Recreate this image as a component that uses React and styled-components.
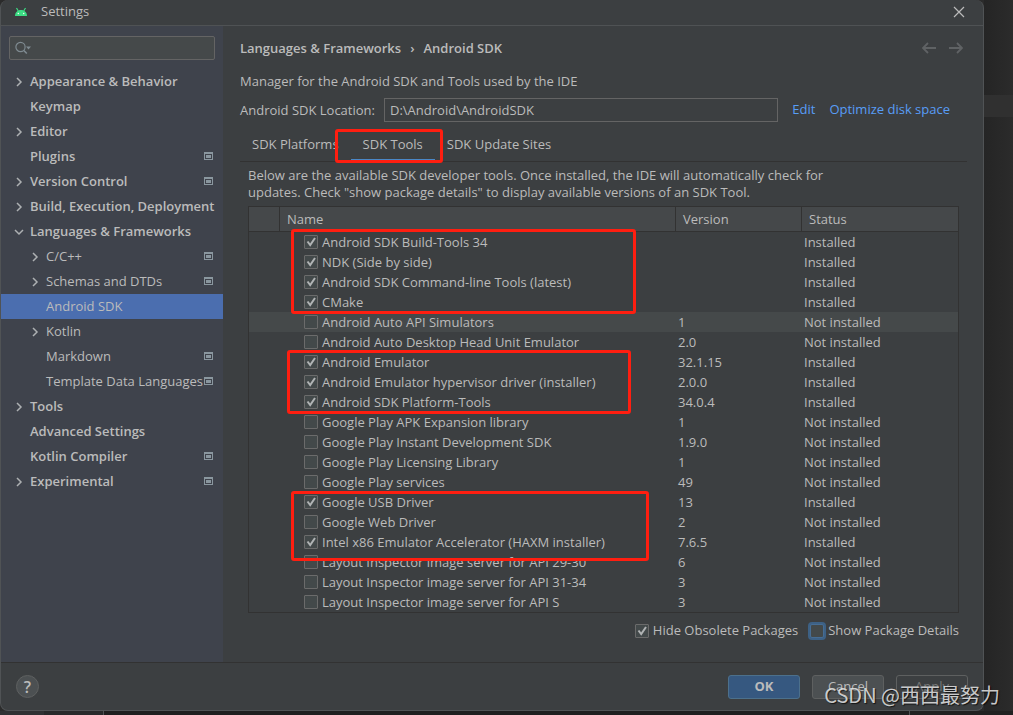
import React, { useState } from 'react';
import styled, { createGlobalStyle, css } from 'styled-components';

const GlobalStyle = createGlobalStyle`
  * {
    box-sizing: border-box;
  }
  body {
    margin: 0;
    background: #2b2b2b;
    color: #bbbbbb;
    font-family: 'Open Sans', 'Noto Sans', 'Noto Sans CJK SC', sans-serif;
    font-size: 13px;
    line-height: 17px;
  }
  button, input {
    font: inherit;
    color: inherit;
  }
`;

const Page = styled.div`
  position: relative;
  display: grid;
  grid-template-columns: minmax(0, 1fr) 29px;
  min-height: 100vh;
  grid-template-rows: auto 1fr;
  overflow: hidden;
`;

const EditorEdge = styled.div`
  background: linear-gradient(to right, #252525, #2b2b2b);
  padding-top: 95px;
`;

const CurrentLine = styled.div`
  height: 22px;
  background: #303030;
`;

const StatusStrip = styled.div`
  grid-column: 1 / -1;
  display: flex;
  min-height: 5px;
  background: #212121;
`;

const StripPart = styled.div`
  flex: none;
  width: ${(props) => props.$width}px;
  background: ${(props) => props.$color};
  border-right: 1px solid ${(props) => props.$line || props.$color};
`;

const Dialog = styled.div`
  display: flex;
  flex-direction: column;
  background: #3c3f41;
  border: 1px solid #505355;
  border-top: none;
  border-radius: 8px;
  overflow: hidden;
`;

const TitleBar = styled.header`
  display: flex;
  align-items: center;
  height: 26px;
  padding: 0 18px 2px 13px;
  border-bottom: 1px solid #4f5254;
`;

const Title = styled.span`
  flex: 1;
  padding-left: 13px;
`;

const IconButton = styled.button`
  display: flex;
  padding: 0;
  border: none;
  background: none;
  color: ${(props) => props.$color || '#bbbbbb'};
`;

const Body = styled.div`
  display: flex;
`;

const Sidebar = styled.nav`
  flex: none;
  width: 222px;
  background: #3f434c;
`;

const SearchBox = styled.label`
  display: flex;
  align-items: center;
  height: 24px;
  margin: 10px 8px 9px;
  padding: 0 5px;
  background: #45494a;
  border: 1px solid #646464;
  border-radius: 2px;
`;

const SearchInput = styled.input`
  flex: 1;
  min-width: 0;
  border: none;
  outline: none;
  background: none;
`;

const Tree = styled.ul`
  margin: 0;
  padding: 0;
  list-style: none;
`;

const TreeItem = styled.li`
  display: flex;
  align-items: center;
  height: 25px;
  padding: 0 10px 0 ${(props) => (props.$nested ? 29 : 13)}px;
  white-space: nowrap;
  font-weight: ${(props) => (props.$nested ? 400 : 600)};
  background: ${(props) => (props.$selected ? '#4b6eaf' : 'transparent')};
`;

const TreeArrow = styled.span`
  display: flex;
  flex: none;
  width: 16px;
`;

const TreeLabel = styled.span`
  flex: 1;
  min-width: 0;
`;

const Main = styled.main`
  flex: 1;
  min-width: 0;
  padding: 0 16px 14px 17px;
`;

const MainHeader = styled.div`
  display: flex;
  align-items: center;
  height: 44px;
`;

const Breadcrumbs = styled.h1`
  display: flex;
  flex: 1;
  gap: 9px;
  margin: 0;
  font-size: 13px;
  font-weight: 600;
`;

const History = styled.div`
  display: flex;
  gap: 13px;
  padding-right: 4px;
`;

const Description = styled.p`
  margin: 0;
  line-height: 22px;
`;

const LocationRow = styled.div`
  display: flex;
  align-items: center;
  margin: 6px 17px 7px 0;
`;

const LocationLabel = styled.label`
  flex: none;
  width: 144px;
`;

const LocationInput = styled.input`
  flex: 1;
  min-width: 0;
  height: 24px;
  padding: 0 5px 1px;
  border: 1px solid #646464;
  background: #3c3f41;
`;

const Link = styled.a`
  margin-left: 14px;
  padding-bottom: 1px;
  color: #589df6;
  text-decoration: none;
`;

const Tabs = styled.div`
  position: relative;
  display: flex;
  height: 33px;
  border-bottom: 1px solid #323232;
`;

const Tab = styled.button`
  padding: 1px 12px 0;
  border: none;
  border-bottom: 2px solid transparent;
  background: none;
  ${(props) => props.$active && css`
    border-bottom-color: #4a88c7;
  `}
`;

const Panel = styled.div`
  padding: 5px 8px 0;
`;

const Hint = styled.p`
  max-width: 600px;
  margin: 0 0 5px;
`;

const TableBox = styled.div`
  position: relative;
  border: 1px solid #323232;
`;

const Table = styled.table`
  width: 100%;
  table-layout: fixed;
  border-spacing: 0;
`;

const HeadCell = styled.th`
  width: ${(props) => (props.$width ? `${props.$width}px` : 'auto')};
  height: 25px;
  padding: 0 7px;
  text-align: left;
  font-weight: 400;
  background: #45484a;
  border-bottom: 1px solid #323232;
  border-right: 1px solid #323232;

  &:last-child {
    border-right: none;
  }
`;

const Row = styled.tr`
  background: ${(props) => (props.$hovered ? '#45494a' : 'transparent')};
`;

const Cell = styled.td`
  height: 20px;
  padding: 0 0 0 ${(props) => (props.$name ? 24 : 2)}px;
  line-height: 20px;
  white-space: nowrap;
`;

const CheckLabel = styled.label`
  display: flex;
  align-items: center;
  gap: 4px;
`;

const CheckWrap = styled.span`
  display: grid;
  flex: none;

  > * {
    grid-area: 1 / 1;
  }
`;

const CheckInput = styled.input`
  appearance: none;
  width: 14px;
  height: 14px;
  margin: 0;
  background: #43494a;
  border: 1px solid #6b6b6b;
  border-radius: 1px;
  ${(props) => props.$focused && css`
    border-color: #466d94;
    border-radius: 2px;
    box-shadow: 0 0 0 2px #3d6185;
  `}
`;

const CheckMark = styled.svg`
  width: 14px;
  height: 14px;
  pointer-events: none;
`;

const Options = styled.div`
  display: flex;
  align-items: center;
  justify-content: flex-end;
  gap: 12px;
  height: 35px;
`;

const Footer = styled.footer`
  display: flex;
  align-items: center;
  gap: 12px;
  height: 48px;
  padding: 0 15px;
  border-top: 1px solid #323232;
`;

const HelpButton = styled.button`
  width: 23px;
  height: 23px;
  margin-right: auto;
  padding: 0;
  border: 1px solid #5e6060;
  border-radius: 50%;
  background: #4c5052;
  font-size: 16px;
  font-weight: 600;
  line-height: 20px;
`;

const Button = styled.button`
  width: 72px;
  height: 24px;
  padding: 0;
  border: 1px solid #5e6060;
  border-radius: 3px;
  background: #4c5052;
  ${(props) => props.$primary && css`
    background: #365880;
    border-color: #4c708c;
    font-weight: 700;
  `}
  &:disabled {
    background: transparent;
    color: #777777;
  }
`;

const RedBox = styled.div`
  position: absolute;
  left: ${(props) => props.$left}px;
  top: ${(props) => props.$top}px;
  width: ${(props) => props.$width}px;
  height: ${(props) => props.$height}px;
  border: 3px solid #ff1e10;
  border-radius: 3px;
  pointer-events: none;
`;

const Watermark = styled.div`
  position: absolute;
  right: 13px;
  bottom: 6px;
  color: rgba(232, 232, 232, 0.85);
  font-family: 'Noto Sans CJK SC', sans-serif;
  font-size: 20px;
  line-height: 30px;
  text-shadow: 1px 1px 1px rgba(0, 0, 0, 0.7);
  pointer-events: none;
`;

const treeItems = [
  { label: 'Appearance & Behavior', arrow: 'right' },
  { label: 'Keymap' },
  { label: 'Editor', arrow: 'right' },
  { label: 'Plugins', project: true },
  { label: 'Version Control', arrow: 'right', project: true },
  { label: 'Build, Execution, Deployment', arrow: 'right' },
  { label: 'Languages & Frameworks', arrow: 'down' },
  { label: 'C/C++', nested: true, arrow: 'right', project: true },
  { label: 'Schemas and DTDs', nested: true, arrow: 'right', project: true },
  { label: 'Android SDK', nested: true, selected: true },
  { label: 'Kotlin', nested: true, arrow: 'right' },
  { label: 'Markdown', nested: true, project: true },
  { label: 'Template Data Languages', nested: true, project: true },
  { label: 'Tools', arrow: 'right' },
  { label: 'Advanced Settings' },
  { label: 'Kotlin Compiler', project: true },
  { label: 'Experimental', arrow: 'right', project: true },
];

const initialTools = [
  { name: 'Android SDK Build-Tools 34', version: '', installed: true },
  { name: 'NDK (Side by side)', version: '', installed: true },
  { name: 'Android SDK Command-line Tools (latest)', version: '', installed: true },
  { name: 'CMake', version: '', installed: true },
  { name: 'Android Auto API Simulators', version: '1', installed: false, hovered: true },
  { name: 'Android Auto Desktop Head Unit Emulator', version: '2.0', installed: false },
  { name: 'Android Emulator', version: '32.1.15', installed: true },
  { name: 'Android Emulator hypervisor driver (installer)', version: '2.0.0', installed: true },
  { name: 'Android SDK Platform-Tools', version: '34.0.4', installed: true },
  { name: 'Google Play APK Expansion library', version: '1', installed: false },
  { name: 'Google Play Instant Development SDK', version: '1.9.0', installed: false },
  { name: 'Google Play Licensing Library', version: '1', installed: false },
  { name: 'Google Play services', version: '49', installed: false },
  { name: 'Google USB Driver', version: '13', installed: true },
  { name: 'Google Web Driver', version: '2', installed: false },
  { name: 'Intel x86 Emulator Accelerator (HAXM installer)', version: '7.6.5', installed: true },
  { name: 'Layout Inspector image server for API 29-30', version: '6', installed: false },
  { name: 'Layout Inspector image server for API 31-34', version: '3', installed: false },
  { name: 'Layout Inspector image server for API S', version: '3', installed: false },
];

const AndroidIcon = () => (
  <svg width="14" height="10" viewBox="0 0 14 10">
    <path d="M1 9C1 5.5 3.5 3 7 3s6 2.500 6 6z" fill="#3ddc84" />
    <path d="M2.500 1l1.800 3M11.500 1L9.700 4" stroke="#3ddc84" strokeWidth="1.200" />
    <circle cx="4.300" cy="6.500" r="0.700" fill="#ffffff" />
    <circle cx="9.700" cy="6.500" r="0.700" fill="#ffffff" />
  </svg>
);

const CloseIcon = () => (
  <svg width="12" height="12" viewBox="0 0 12 12" fill="none" stroke="currentColor" strokeWidth="1.200">
    <path d="M1 1l10 10M11 1L1 11" />
  </svg>
);

const SearchIcon = () => (
  <svg width="18" height="14" viewBox="0 0 18 14" fill="none" stroke="#7f8b91">
    <circle cx="5.500" cy="6" r="4.600" strokeWidth="1.200" />
    <path d="M8.800 9.500l3 3" strokeWidth="1.600" />
    <path d="M11 5.500h5l-2.500 3z" fill="#7f8b91" stroke="none" />
  </svg>
);

const ArrowIcon = ({ direction }) => (
  <svg width="10" height="10" viewBox="0 0 10 10" fill="none" stroke="#adb0b2" strokeWidth="1.500">
    <path d={direction === 'down' ? 'M1 3l4 4 4-4' : 'M3 1l4 4-4 4'} />
  </svg>
);

const ProjectIcon = () => (
  <svg width="9" height="9" viewBox="0 0 9 9" fill="#8a979f">
    <path fillRule="evenodd" d="M0 0h9v8H0zM1 2v5h7V2z" />
    <path d="M2 3h5v3H2z" />
  </svg>
);

const HistoryIcon = ({ forward }) => (
  <svg width="14" height="12" viewBox="0 0 14 12" fill="none" stroke="currentColor" strokeWidth="1.800">
    <path d={forward ? 'M0 6h13M8 1l5 5-5 5' : 'M14 6H1M6 1L1 6l5 5'} />
  </svg>
);

const Checkbox = ({ checked, onChange, focused }) => (
  <CheckWrap>
    <CheckInput type="checkbox" checked={checked} onChange={onChange} $focused={focused} />
    {checked && (
      <CheckMark viewBox="0 0 14 14" fill="none" stroke="#b0b3b4" strokeWidth="2">
        <path d="M3.500 6.500l2.700 3.500 4.800-7" />
      </CheckMark>
    )}
  </CheckWrap>
);

const App = () => {
  const [search, setSearch] = useState('');
  const [location, setLocation] = useState('D:\\Android\\AndroidSDK');
  const [tab, setTab] = useState('SDK Tools');
  const [checked, setChecked] = useState(initialTools.map((tool) => tool.installed));
  const [hideObsolete, setHideObsolete] = useState(true);
  const [showDetails, setShowDetails] = useState(false);

  const toggleTool = (index) => {
    setChecked(checked.map((value, i) => (i === index ? !value : value)));
  };

  return (
    <Page>
      <GlobalStyle />
      <Dialog>
        <TitleBar>
          <AndroidIcon />
          <Title>Settings</Title>
          <IconButton aria-label="Close"><CloseIcon /></IconButton>
        </TitleBar>
        <Body>
          <Sidebar>
            <SearchBox>
              <SearchIcon />
              <SearchInput
                type="text"
                aria-label="Search settings"
                value={search}
                onChange={(e) => setSearch(e.target.value)}
              />
            </SearchBox>
            <Tree>
              {treeItems.map((item) => (
                <TreeItem key={item.label} $nested={item.nested} $selected={item.selected}>
                  <TreeArrow>{item.arrow && <ArrowIcon direction={item.arrow} />}</TreeArrow>
                  <TreeLabel>{item.label}</TreeLabel>
                  {item.project && <ProjectIcon />}
                </TreeItem>
              ))}
            </Tree>
          </Sidebar>
          <Main>
            <MainHeader>
              <Breadcrumbs>
                <span>Languages &amp; Frameworks</span>
                <span>›</span>
                <span>Android SDK</span>
              </Breadcrumbs>
              <History>
                <IconButton $color="#5f6264" aria-label="Back"><HistoryIcon /></IconButton>
                <IconButton $color="#5f6264" aria-label="Forward"><HistoryIcon forward /></IconButton>
              </History>
            </MainHeader>
            <Description>Manager for the Android SDK and Tools used by the IDE</Description>
            <LocationRow>
              <LocationLabel htmlFor="sdk-location">Android SDK Location:</LocationLabel>
              <LocationInput
                id="sdk-location"
                type="text"
                value={location}
                onChange={(e) => setLocation(e.target.value)}
              />
              <Link href="#edit">Edit</Link>
              <Link href="#optimize">Optimize disk space</Link>
            </LocationRow>
            <Tabs>
              {['SDK Platforms', 'SDK Tools', 'SDK Update Sites'].map((name) => (
                <Tab key={name} $active={tab === name} onClick={() => setTab(name)}>{name}</Tab>
              ))}
              <RedBox $left={95} $top={0} $width={108} $height={34} />
            </Tabs>
            <Panel>
              <Hint>
                Below are the available SDK developer tools. Once installed, the IDE will automatically check for
                updates. Check "show package details" to display available versions of an SDK Tool.
              </Hint>
              <TableBox>
                <Table>
                  <thead>
                    <tr>
                      <HeadCell $width={31} />
                      <HeadCell>Name</HeadCell>
                      <HeadCell $width={126}>Version</HeadCell>
                      <HeadCell $width={156}>Status</HeadCell>
                    </tr>
                  </thead>
                  <tbody>
                    {initialTools.map((tool, index) => (
                      <Row key={tool.name} $hovered={tool.hovered}>
                        <Cell />
                        <Cell $name>
                          <CheckLabel>
                            <Checkbox checked={checked[index]} onChange={() => toggleTool(index)} />
                            {tool.name}
                          </CheckLabel>
                        </Cell>
                        <Cell>{tool.version}</Cell>
                        <Cell>{tool.installed ? 'Installed' : 'Not installed'}</Cell>
                      </Row>
                    ))}
                  </tbody>
                </Table>
                <RedBox $left={42} $top={22} $width={345} $height={85} />
                <RedBox $left={38} $top={143} $width={344} $height={64} />
                <RedBox $left={42} $top={284} $width={358} $height={70} />
              </TableBox>
              <Options>
                <CheckLabel>
                  <Checkbox checked={hideObsolete} onChange={() => setHideObsolete(!hideObsolete)} />
                  Hide Obsolete Packages
                </CheckLabel>
                <CheckLabel>
                  <Checkbox checked={showDetails} onChange={() => setShowDetails(!showDetails)} focused />
                  Show Package Details
                </CheckLabel>
              </Options>
            </Panel>
          </Main>
        </Body>
        <Footer>
          <HelpButton aria-label="Help">?</HelpButton>
          <Button $primary>OK</Button>
          <Button>Cancel</Button>
          <Button disabled>Apply</Button>
        </Footer>
      </Dialog>
      <EditorEdge>
        <CurrentLine />
      </EditorEdge>
      <StatusStrip>
        <StripPart $width={44} $color="#303234" />
        <StripPart $width={60} $color="#282a2b" $line="#505355" />
        <StripPart $width={806} $color="#1f1f1f" $line="#505355" />
      </StatusStrip>
      <Watermark>CSDN @西西最努力</Watermark>
    </Page>
  );
};

export default App;
